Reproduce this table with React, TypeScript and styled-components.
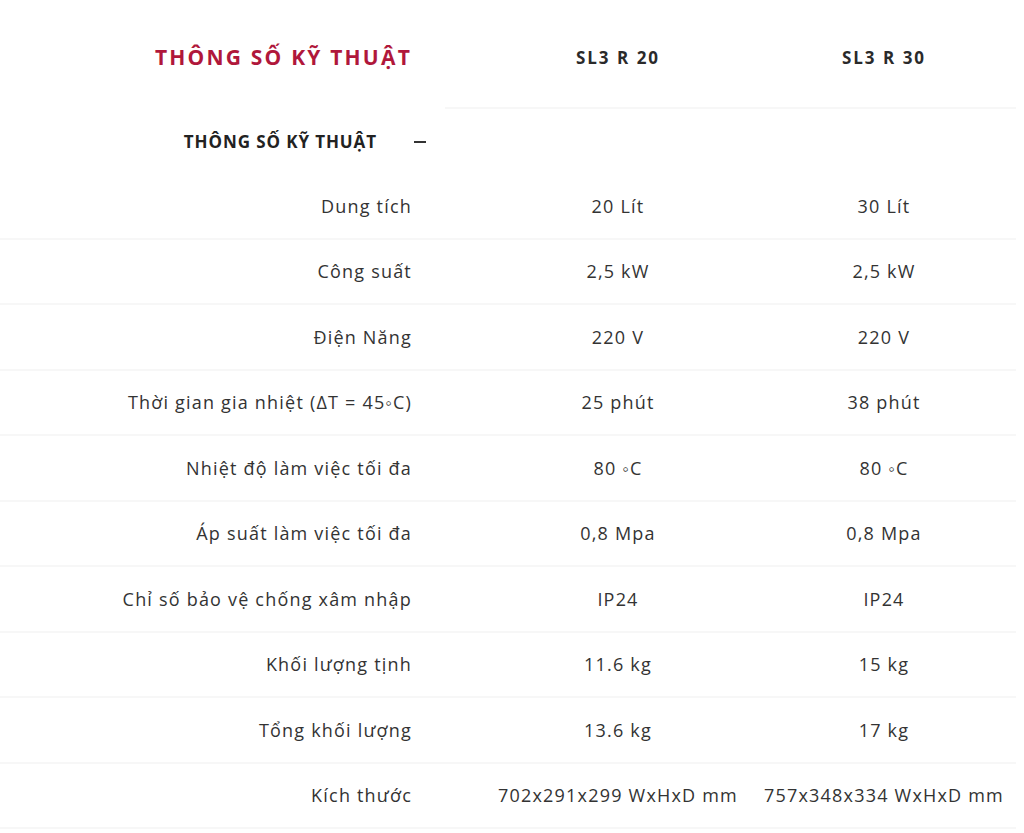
import React from "react";
import styled, { createGlobalStyle } from "styled-components";

const GlobalStyle = createGlobalStyle`
  html, body { margin: 0; padding: 0; background: #fff; }
  body {
    font-family: "Open Sans", "Liberation Sans", sans-serif;
    color: #333;
    -webkit-font-smoothing: antialiased;
  }
`;

const Table = styled.div`
  width: 1016px;
`;

const Grid = styled.div`
  display: grid;
  grid-template-columns: 484px 268px 264px;
  align-items: center;
`;

const HeaderRow = styled(Grid)`
  height: 107px;
  box-sizing: border-box;
  padding-top: 7px;
`;

const HeaderRule = styled.div`
  margin-left: 445px;
  height: 2px;
  background: #f7f7f7;
`;

const Title = styled.h2`
  margin: 0;
  padding-right: 72px;
  text-align: right;
  font-size: 21px;
  font-weight: 700;
  letter-spacing: 2.2px;
  color: #b0173b;
`;

const ModelName = styled.div`
  text-align: center;
  font-size: 17px;
  font-weight: 700;
  letter-spacing: 2px;
  color: #2a2a2a;
`;

const SectionRow = styled.div`
  height: 65px;
  width: 484px;
  box-sizing: border-box;
  display: flex;
  align-items: center;
  justify-content: flex-end;
  padding-right: 58px;
  gap: 37px;
`;

const SectionTitle = styled.span`
  font-size: 17px;
  font-weight: 700;
  letter-spacing: 0.9px;
  color: #222;
`;

const Toggle = styled.span`
  display: block;
  width: 12px;
  height: 2px;
  background: #333;
`;

const Row = styled(Grid)`
  height: 65.5px;
  box-sizing: border-box;
  border-bottom: 2px solid #f7f7f7;
`;

const Label = styled.div`
  text-align: right;
  padding-right: 72px;
  font-size: 18px;
  letter-spacing: 1.2px;
  color: #333;
`;

const Value = styled.div`
  text-align: center;
  font-size: 18px;
  letter-spacing: 1.2px;
  color: #333;
  white-space: nowrap;
`;

const specs: [string, string, string][] = [
  ["Dung tích", "20 Lít", "30 Lít"],
  ["Công suất", "2,5 kW", "2,5 kW"],
  ["Điện Năng", "220 V", "220 V"],
  ["Thời gian gia nhiệt (ΔT = 45◦C)", "25 phút", "38 phút"],
  ["Nhiệt độ làm việc tối đa", "80 ◦C", "80 ◦C"],
  ["Áp suất làm việc tối đa", "0,8 Mpa", "0,8 Mpa"],
  ["Chỉ số bảo vệ chống xâm nhập", "IP24", "IP24"],
  ["Khối lượng tịnh", "11.6 kg", "15 kg"],
  ["Tổng khối lượng", "13.6 kg", "17 kg"],
  ["Kích thước", "702x291x299 WxHxD mm", "757x348x334 WxHxD mm"],
];

export default function App() {
  return (
    <>
      <GlobalStyle />
      <Table>
        <HeaderRow>
          <Title>THÔNG SỐ KỸ THUẬT</Title>
          <ModelName>SL3 R 20</ModelName>
          <ModelName>SL3 R 30</ModelName>
        </HeaderRow>
        <HeaderRule />
        <SectionRow>
          <SectionTitle>THÔNG SỐ KỸ THUẬT</SectionTitle>
          <Toggle aria-label="Thu gọn" />
        </SectionRow>
        {specs.map(([label, a, b]) => (
          <Row key={label}>
            <Label>{label}</Label>
            <Value>{a}</Value>
            <Value>{b}</Value>
          </Row>
        ))}
      </Table>
    </>
  );
}
